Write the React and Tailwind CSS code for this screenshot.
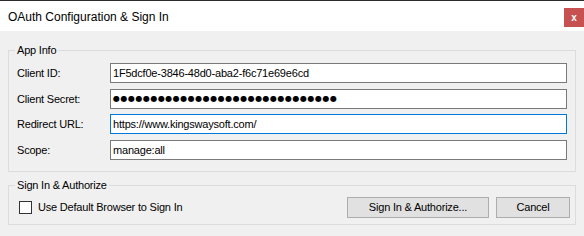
import React from 'react';

const fieldRows = [
  { label: 'Client ID:', value: '1F5dcf0e-3846-48d0-aba2-f6c71e69e6cd', mt: 'mt-0' },
  { label: 'Client Secret:', secret: true, mt: 'mt-[6px]' },
  { label: 'Redirect URL:', value: 'https://www.kingswaysoft.com/', focused: true, mt: 'mt-[5px]' },
  { label: 'Scope:', value: 'manage:all', mt: 'mt-[6px]' },
];

const FieldRow = ({ label, value, secret, focused, mt }) => (
  <div className={`flex items-center h-[20px] ${mt}`}>
    <div className="w-[101px] pl-[8px] text-black">{label}</div>
    <div
      className={`flex-1 h-[20px] bg-white border flex items-center pl-[2px] overflow-hidden whitespace-nowrap ${
        focused ? 'border-[#0078d7]' : 'border-[#7a7a7a]'
      }`}
    >
      {secret ? (
        <span className="font-['DejaVu_Sans',sans-serif] text-[8px] tracking-[0.5px] text-black leading-none">
          {'●'.repeat(30)}
        </span>
      ) : (
        value
      )}
    </div>
  </div>
);

export default function App() {
  return (
    <div className="w-[584px] h-[236px] bg-[#f0f0f0] flex flex-col font-['Liberation_Sans',Arial,sans-serif] text-[11px] tracking-[-0.2px] text-black overflow-hidden">
      {/* title bar */}
      <div className="h-[31px] bg-white border-t border-[#2b2b2b] flex items-start shrink-0">
        <div className="pl-[8px] pt-[9px] text-[12px] tracking-normal leading-[14px]">OAuth Configuration &amp; Sign In</div>
        <div className="ml-auto mt-[7px] w-[20px] h-[19px] bg-[#c75050] flex items-center justify-center text-white font-bold text-[10px] leading-none tracking-normal">
          x
        </div>
      </div>

      <div className="px-[8px]">
        <fieldset className="mt-[11px] w-[568px] h-[130px] border border-[#dcdcdc] pb-[11px]">
          <legend className="ml-[6px] px-[2px] leading-[16px]">App Info</legend>
          <div className="pt-[5px] pr-[8px]">
            {fieldRows.map((row) => (
              <FieldRow key={row.label} {...row} />
            ))}
          </div>
        </fieldset>

        <fieldset className="mt-[5px] w-[568px] h-[48px] border border-[#dcdcdc]">
          <legend className="ml-[6px] px-[2px] leading-[16px]">Sign In &amp; Authorize</legend>
          <div className="flex items-center pt-[4px] pr-[5px]">
            <div className="ml-[10px] w-[13px] h-[13px] bg-white border border-[#333333]" />
            <span className="ml-[6px]">Use Default Browser to Sign In</span>
            <button className="ml-auto w-[142px] h-[21px] bg-[#e1e1e1] border border-[#adadad]">
              Sign In &amp; Authorize...
            </button>
            <button className="ml-[7px] w-[74px] h-[21px] bg-[#e1e1e1] border border-[#adadad]">Cancel</button>
          </div>
        </fieldset>
      </div>
    </div>
  );
}
